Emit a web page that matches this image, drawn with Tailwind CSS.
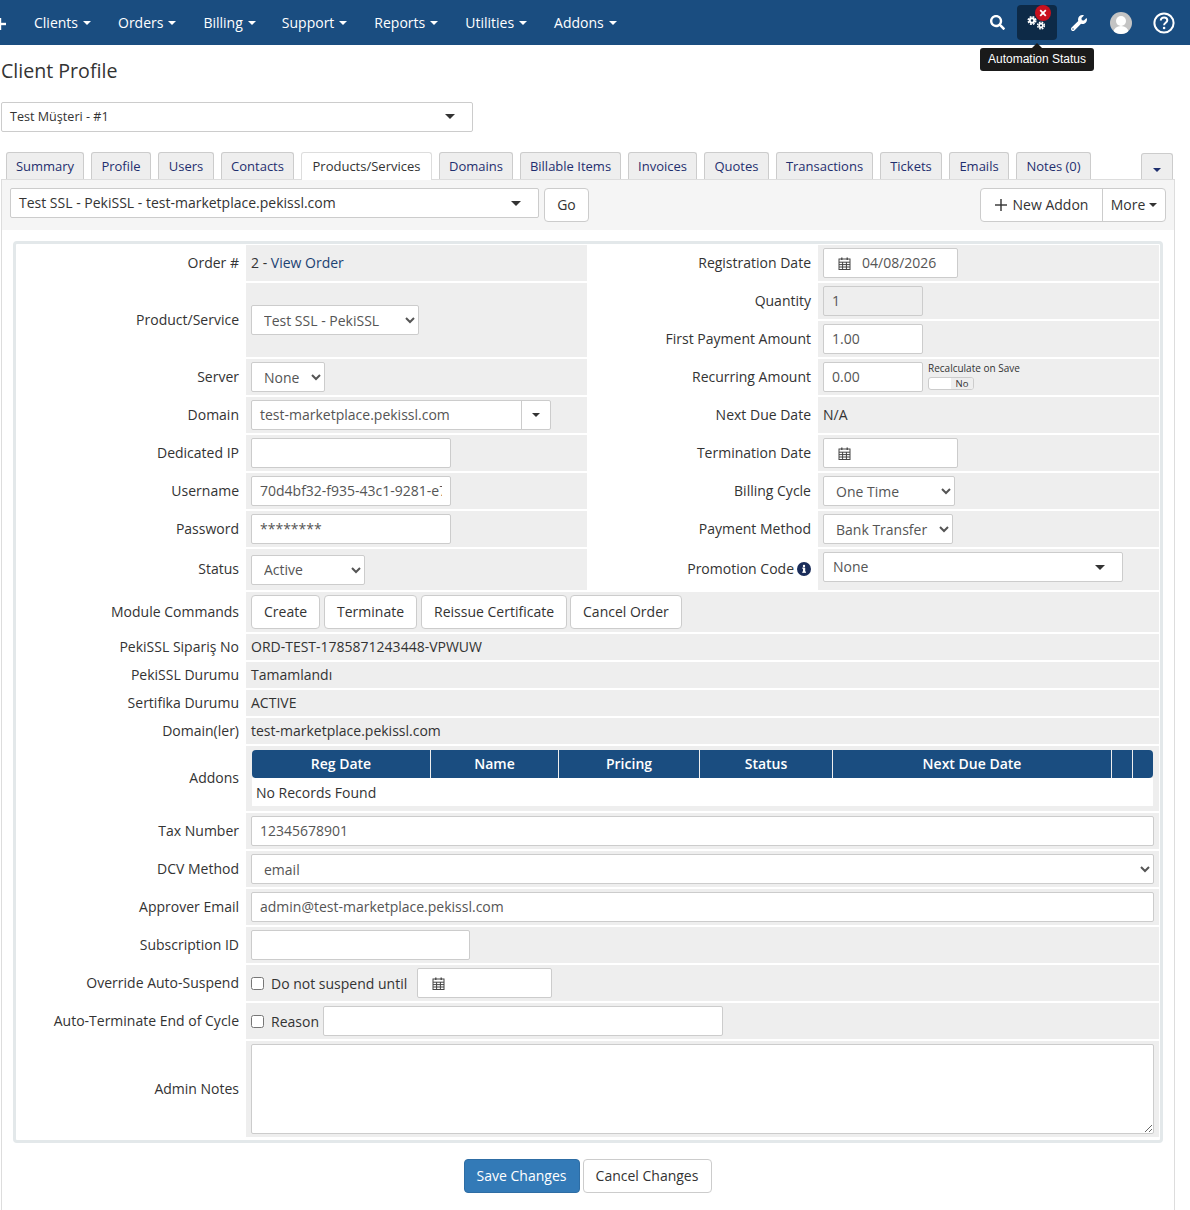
<!DOCTYPE html>
<html lang="en">
<head>
  <meta charset="UTF-8">
  <meta name="viewport" content="width=device-width, initial-scale=1.0">
  <title>Client Profile</title>
  <script src="https://cdn.jsdelivr.net/npm/@tailwindcss/browser@4"></script>
</head>
<body class="h-[1210px] overflow-hidden bg-white font-['Open_Sans',sans-serif] text-[14px] leading-[20px] text-[#333]">

  <!-- top nav -->
  <nav class="relative flex h-[45px] items-center bg-[#1a4d80] text-white">
    <svg class="absolute left-[-6px] top-[18px] h-[12px] w-[12px]" viewBox="0 0 12 12" fill="#fff"><rect x="0" y="4.8" width="12" height="2.4"/><rect x="4.8" y="0" width="2.4" height="12"/></svg>
    <a class="ml-[34px] flex items-center gap-[5px]">Clients <span class="border-x-[4px] border-t-[4px] border-x-transparent border-t-white"></span></a>
    <a class="ml-[27px] flex items-center gap-[5px]">Orders <span class="border-x-[4px] border-t-[4px] border-x-transparent border-t-white"></span></a>
    <a class="ml-[27px] flex items-center gap-[5px]">Billing <span class="border-x-[4px] border-t-[4px] border-x-transparent border-t-white"></span></a>
    <a class="ml-[26px] flex items-center gap-[5px]">Support <span class="border-x-[4px] border-t-[4px] border-x-transparent border-t-white"></span></a>
    <a class="ml-[27px] flex items-center gap-[5px]">Reports <span class="border-x-[4px] border-t-[4px] border-x-transparent border-t-white"></span></a>
    <a class="ml-[27px] flex items-center gap-[5px]">Utilities <span class="border-x-[4px] border-t-[4px] border-x-transparent border-t-white"></span></a>
    <a class="ml-[27px] flex items-center gap-[5px]">Addons <span class="border-x-[4px] border-t-[4px] border-x-transparent border-t-white"></span></a>

    <div class="ml-auto flex items-center">
      <svg class="h-[15px] w-[15px]" viewBox="0 0 512 512" fill="#fff"><path d="M505 442.7L405.3 343c-4.5-4.5-10.6-7-17-7H372c27.6-35.3 44-79.7 44-128C416 93.1 322.9 0 208 0S0 93.1 0 208s93.1 208 208 208c48.3 0 92.7-16.4 128-44v16.3c0 6.4 2.5 12.5 7 17l99.7 99.7c9.4 9.4 24.6 9.4 33.9 0l28.3-28.3c9.4-9.4 9.4-24.6.1-34zM208 336c-70.7 0-128-57.2-128-128 0-70.7 57.2-128 128-128 70.7 0 128 57.2 128 128 0 70.7-57.2 128-128 128z"/></svg>
      <div class="relative ml-[12px] flex h-[35px] w-[40px] items-center justify-center rounded-[4px] bg-[#0d2a47]">
        <svg class="h-[20px] w-[20px]" viewBox="0 0 20 20" fill="none" stroke="#fff">
          <circle cx="5" cy="7.5" r="2.2" stroke-width="1.9"/>
          <circle cx="5" cy="7.5" r="3.8" stroke-width="1.5" stroke-dasharray="1.9 1.1"/>
          <circle cx="14" cy="12.5" r="1.9" stroke-width="1.7"/>
          <circle cx="14" cy="12.5" r="3.4" stroke-width="1.4" stroke-dasharray="1.7 1"/>
        </svg>
        <span class="absolute left-[18px] top-0 flex h-[16px] w-[16px] items-center justify-center rounded-full bg-[#c8101e]">
          <svg class="h-[8px] w-[8px]" viewBox="0 0 8 8" stroke="#fff" stroke-width="1.8"><path d="M1.2 1.2l5.6 5.6M6.8 1.2L1.2 6.8"/></svg>
        </span>
      </div>
      <svg class="ml-[14px] h-[16px] w-[16px]" viewBox="0 0 512 512" fill="#fff"><path d="M507.73 109.1c-2.24-9.03-13.54-12.09-20.12-5.51l-74.36 74.36-67.88-11.31-11.31-67.88 74.36-74.36c6.62-6.62 3.43-17.9-5.66-20.16-47.38-11.74-99.55.91-136.58 37.93-39.64 39.64-50.55 97.1-34.05 147.2L18.74 402.76c-24.99 24.99-24.99 65.51 0 90.5 24.99 24.99 65.51 24.99 90.5 0l213.21-213.21c50.12 16.71 107.47 5.68 147.37-34.22 37.07-37.07 49.7-89.32 37.91-136.73zM64 472c-13.25 0-24-10.75-24-24 0-13.26 10.75-24 24-24s24 10.74 24 24c0 13.25-10.75 24-24 24z"/></svg>
      <svg class="ml-[23px] h-[22px] w-[22px]" viewBox="0 0 22 22"><defs><clipPath id="av"><circle cx="11" cy="11" r="11"/></clipPath></defs><circle cx="11" cy="11" r="11" fill="#c4c4c4"/><g clip-path="url(#av)" fill="#fff"><circle cx="11" cy="9" r="5"/><ellipse cx="11" cy="20" rx="7.5" ry="6"/></g></svg>
      <svg class="ml-[21px] mr-[15px] h-[22px] w-[22px]" viewBox="0 0 22 22" fill="none" stroke="#fff"><circle cx="11" cy="11" r="9.6" stroke-width="2"/><path d="M7.8 8.6c0-1.9 1.4-3.1 3.3-3.1 1.9 0 3.2 1.2 3.2 2.8 0 2.5-3.2 2.4-3.2 4.9" stroke-width="2"/><circle cx="11.1" cy="16" r="1.3" fill="#fff" stroke="none"/></svg>
    </div>

    <!-- tooltip -->
    <div class="absolute left-[980px] top-[48px] z-10 h-[23px] w-[114px] rounded-[3px] bg-[#1a1a1a] text-center font-['Liberation_Sans',sans-serif] text-[12px] leading-[22px] text-white">
      <span class="absolute left-[52px] top-[-5px] border-x-[5px] border-b-[5px] border-x-transparent border-b-[#1a1a1a]"></span>
      Automation Status
    </div>
  </nav>

  <h1 class="ml-[1px] mt-[12px] text-[19.6px] leading-[28px] text-[#333]">Client Profile</h1>

  <div class="ml-[1px] mt-[17px] flex h-[30px] w-[472px] items-center justify-between rounded-[2px] border border-[#ccc] pb-[1px] pl-[8px] pr-[17px] text-[12.6px]">
    <span>Test Müşteri - #1</span>
    <span class="border-x-[5px] border-t-[5px] border-x-transparent border-t-[#333]"></span>
  </div>

  <!-- tabs -->
  <div class="relative ml-[6px] mt-[20px] flex h-[28px] items-start gap-[7px] text-[13px] text-[#1f2f6e]">
    <a class="flex h-[27px] w-[78px] items-center justify-center rounded-t-[3px] border border-b-0 border-[#ccc] bg-[#eee]">Summary</a>
    <a class="flex h-[27px] w-[60px] items-center justify-center rounded-t-[3px] border border-b-0 border-[#ccc] bg-[#eee]">Profile</a>
    <a class="flex h-[27px] w-[56px] items-center justify-center rounded-t-[3px] border border-b-0 border-[#ccc] bg-[#eee]">Users</a>
    <a class="flex h-[27px] w-[73px] items-center justify-center rounded-t-[3px] border border-b-0 border-[#ccc] bg-[#eee]">Contacts</a>
    <a class="relative z-10 flex h-[28px] w-[131px] items-center justify-center rounded-t-[3px] border border-b-0 border-[#ddd] bg-white pb-[1px] text-[#333]">Products/Services</a>
    <a class="flex h-[27px] w-[74px] items-center justify-center rounded-t-[3px] border border-b-0 border-[#ccc] bg-[#eee]">Domains</a>
    <a class="flex h-[27px] w-[101px] items-center justify-center rounded-t-[3px] border border-b-0 border-[#ccc] bg-[#eee]">Billable Items</a>
    <a class="flex h-[27px] w-[69px] items-center justify-center rounded-t-[3px] border border-b-0 border-[#ccc] bg-[#eee]">Invoices</a>
    <a class="flex h-[27px] w-[65px] items-center justify-center rounded-t-[3px] border border-b-0 border-[#ccc] bg-[#eee]">Quotes</a>
    <a class="flex h-[27px] w-[97px] items-center justify-center rounded-t-[3px] border border-b-0 border-[#ccc] bg-[#eee]">Transactions</a>
    <a class="flex h-[27px] w-[62px] items-center justify-center rounded-t-[3px] border border-b-0 border-[#ccc] bg-[#eee]">Tickets</a>
    <a class="flex h-[27px] w-[60px] items-center justify-center rounded-t-[3px] border border-b-0 border-[#ccc] bg-[#eee]">Emails</a>
    <a class="flex h-[27px] w-[75px] items-center justify-center rounded-t-[3px] border border-b-0 border-[#ccc] bg-[#eee]">Notes (0)</a>
    <a class="absolute left-[1135px] top-[1px] flex h-[26px] w-[32px] items-end justify-center rounded-t-[3px] border border-b-0 border-[#ccc] bg-[#eee] pb-[7px]"><span class="border-x-[4px] border-t-[4px] border-x-transparent border-t-[#1f2f6e]"></span></a>
  </div>

  <!-- tab panel -->
  <div class="-mt-[1px] ml-[1px] h-[1031px] w-[1174px] border border-b-0 border-[#ddd]">
    <div class="flex h-[50px] items-start bg-[#f5f5f5] pl-[8px] pr-[8px] pt-[8px]">
      <div class="flex h-[30px] w-[529px] items-center justify-between rounded-[2px] border border-[#ccc] bg-white pl-[8px] pr-[17px]">
        <span>Test SSL - PekiSSL - test-marketplace.pekissl.com</span>
        <span class="border-x-[5px] border-t-[5px] border-x-transparent border-t-[#333]"></span>
      </div>
      <button class="ml-[5px] h-[34px] w-[45px] rounded-[4px] border border-[#ccc] bg-white text-[#333]">Go</button>
      <div class="ml-auto flex h-[34px] rounded-[4px] border border-[#ccc] bg-white">
        <span class="flex w-[122px] items-center justify-center gap-[6px] border-r border-[#ccc]">
          <svg class="h-[12px] w-[12px]" viewBox="0 0 12 12" fill="#333"><rect x="0" y="5.3" width="12" height="1.4"/><rect x="5.3" y="0" width="1.4" height="12"/></svg>
          New Addon
        </span>
        <span class="flex w-[62px] items-center justify-center gap-[4px]">More <span class="border-x-[4px] border-t-[4px] border-x-transparent border-t-[#333]"></span></span>
      </div>
    </div>

    <!-- form table -->
    <div class="ml-[11px] mt-[11px] w-[1150px] rounded-[4px] border-[3px] border-[#e3e8ea] bg-white pb-[3px] pl-[2px] pr-[1px] pt-[1px]">
      <div class="grid grid-cols-[226px_341px_227px_341px] gap-[2px] grid-rows-[36px_36px_36px_36px_36px_36px_36px_36px_41px_40px_26px_26px_26px_26px_65px_36px_36px_36px_36px_36px_36px_96px]">

        <div class="flex items-center justify-end pr-[5px]">Order #</div>
        <div class="flex items-center bg-[#eee] pl-[5px]">2 -&nbsp;<a class="text-[#1c4272]">View Order</a></div>
        <div class="flex items-center justify-end pr-[5px]">Registration Date</div>
        <div class="flex items-center bg-[#eee] pl-[5px]">
          <div class="flex h-[30px] w-[135px] items-center rounded-[2px] border border-[#ccc] bg-white pl-[14px] text-[#555]">
            <svg class="h-[13px] w-[13px]" viewBox="0 0 13 13" fill="none" stroke="#444"><rect x="1" y="2" width="11" height="10.5"/><path d="M1 5.2h11M1 7.6h11M1 10h11M4.6 5v7.5M8.4 5v7.5"/><path d="M3.8 .5v2.5M9.2 .5v2.5" stroke-width="1.3"/></svg>
            <span class="ml-[11px]">04/08/2026</span>
          </div>
        </div>

        <div class="row-span-2 flex items-center justify-end pr-[5px]">Product/Service</div>
        <div class="row-span-2 flex items-center bg-[#eee] pl-[5px]">
          <select class="h-[30px] w-[168px] rounded-[2px] border border-[#ccc] bg-white pl-[8px] text-[#555]"><option>Test SSL - PekiSSL</option></select>
        </div>
        <div class="flex items-center justify-end pr-[5px]">Quantity</div>
        <div class="flex items-center bg-[#eee] pl-[5px]">
          <input class="h-[30px] w-[100px] rounded-[2px] border border-[#ccc] bg-[#eee] px-[8px] pb-[2px] text-[#555]" value="1" disabled>
        </div>

        <div class="flex items-center justify-end pr-[5px]">First Payment Amount</div>
        <div class="flex items-center bg-[#eee] pl-[5px]">
          <input class="h-[30px] w-[100px] rounded-[2px] border border-[#ccc] bg-white px-[8px] pb-[2px] text-[#555]" value="1.00">
        </div>

        <div class="flex items-center justify-end pr-[5px]">Server</div>
        <div class="flex items-center bg-[#eee] pl-[5px]">
          <select class="h-[30px] w-[74px] rounded-[2px] border border-[#ccc] bg-white pl-[8px] text-[#555]"><option>None</option></select>
        </div>
        <div class="flex items-center justify-end pr-[5px]">Recurring Amount</div>
        <div class="flex items-center bg-[#eee] pl-[5px]">
          <input class="h-[30px] w-[100px] rounded-[2px] border border-[#ccc] bg-white px-[8px] pb-[2px] text-[#555]" value="0.00">
          <div class="ml-[5px] flex flex-col pb-[2px]">
            <span class="text-[10px] leading-[12px]">Recalculate on Save</span>
            <span class="mt-[3px] flex h-[13px] w-[46px] overflow-hidden rounded-[3px] border border-[#ccc] bg-white">
              <span class="w-[22px]"></span>
              <span class="flex-1 bg-[#eee] text-center text-[9.5px] leading-[12px]">No</span>
            </span>
          </div>
        </div>

        <div class="flex items-center justify-end pr-[5px]">Domain</div>
        <div class="flex items-center bg-[#eee] pl-[5px]">
          <div class="flex h-[30px] w-[300px] rounded-[2px] border border-[#ccc] bg-white text-[#555]">
            <span class="flex flex-1 items-center pl-[8px]">test-marketplace.pekissl.com</span>
            <span class="flex w-[29px] items-center justify-center border-l border-[#ccc]"><span class="border-x-[4px] border-t-[4px] border-x-transparent border-t-[#333]"></span></span>
          </div>
        </div>
        <div class="flex items-center justify-end pr-[5px]">Next Due Date</div>
        <div class="flex items-center bg-[#eee] pl-[5px]">N/A</div>

        <div class="flex items-center justify-end pr-[5px]">Dedicated IP</div>
        <div class="flex items-center bg-[#eee] pl-[5px]">
          <input class="h-[30px] w-[200px] rounded-[2px] border border-[#ccc] bg-white px-[8px] pb-[2px] text-[#555]">
        </div>
        <div class="flex items-center justify-end pr-[5px]">Termination Date</div>
        <div class="flex items-center bg-[#eee] pl-[5px]">
          <div class="flex h-[30px] w-[135px] items-center rounded-[2px] border border-[#ccc] bg-white pl-[14px]">
            <svg class="h-[13px] w-[13px]" viewBox="0 0 13 13" fill="none" stroke="#444"><rect x="1" y="2" width="11" height="10.5"/><path d="M1 5.2h11M1 7.6h11M1 10h11M4.6 5v7.5M8.4 5v7.5"/><path d="M3.8 .5v2.5M9.2 .5v2.5" stroke-width="1.3"/></svg>
          </div>
        </div>

        <div class="flex items-center justify-end pr-[5px]">Username</div>
        <div class="flex items-center bg-[#eee] pl-[5px]">
          <input class="h-[30px] w-[200px] rounded-[2px] border border-[#ccc] bg-white px-[8px] pb-[2px] text-[#555]" value="70d4bf32-f935-43c1-9281-e7a1c3">
        </div>
        <div class="flex items-center justify-end pr-[5px]">Billing Cycle</div>
        <div class="flex items-center bg-[#eee] pl-[5px]">
          <select class="h-[30px] w-[132px] rounded-[2px] border border-[#ccc] bg-white pl-[8px] text-[#555]"><option>One Time</option></select>
        </div>

        <div class="flex items-center justify-end pr-[5px]">Password</div>
        <div class="flex items-center bg-[#eee] pl-[5px]">
          <input class="h-[30px] w-[200px] rounded-[2px] border border-[#ccc] bg-white px-[8px] pb-[2px] text-[#555]" value="********">
        </div>
        <div class="flex items-center justify-end pr-[5px]">Payment Method</div>
        <div class="flex items-center bg-[#eee] pl-[5px]">
          <select class="h-[30px] w-[130px] rounded-[2px] border border-[#ccc] bg-white pl-[8px] text-[#555]"><option>Bank Transfer</option></select>
        </div>

        <div class="flex items-center justify-end pb-[1px] pr-[5px]">Status</div>
        <div class="flex items-center bg-[#eee] pl-[5px]">
          <select class="h-[30px] w-[114px] rounded-[2px] border border-[#ccc] bg-white pl-[8px] text-[#555]"><option>Active</option></select>
        </div>
        <div class="flex items-center justify-end gap-[3px] pb-[1px] pr-[5px]">
          Promotion Code
          <svg class="h-[14px] w-[14px]" viewBox="0 0 14 14"><circle cx="7" cy="7" r="7" fill="#1a2d5a"/><rect x="6" y="5.8" width="2.2" height="4.4" fill="#fff"/><rect x="5.2" y="9.6" width="3.8" height="1.2" fill="#fff"/><rect x="5.2" y="5.6" width="2.5" height="1.1" fill="#fff"/><circle cx="7" cy="3.9" r="1.2" fill="#fff"/></svg>
        </div>
        <div class="flex items-start bg-[#eee] pl-[5px] pt-[3px]">
          <div class="flex h-[30px] w-[300px] items-center justify-between rounded-[2px] border border-[#ccc] bg-white pl-[9px] pr-[17px] text-[#555]">
            <span>None</span>
            <span class="border-x-[5px] border-t-[5px] border-x-transparent border-t-[#333]"></span>
          </div>
        </div>

        <div class="flex items-center justify-end pr-[5px]">Module Commands</div>
        <div class="col-span-3 flex items-center bg-[#eee] pl-[5px]">
          <button class="h-[34px] rounded-[4px] border border-[#ccc] bg-white px-[12px]">Create</button>
          <button class="ml-[4px] h-[34px] rounded-[4px] border border-[#ccc] bg-white px-[12px]">Terminate</button>
          <button class="ml-[4px] h-[34px] rounded-[4px] border border-[#ccc] bg-white px-[12px]">Reissue Certificate</button>
          <button class="ml-[3px] h-[34px] rounded-[4px] border border-[#ccc] bg-white px-[12px]">Cancel Order</button>
        </div>

        <div class="flex items-center justify-end pr-[5px]">PekiSSL Sipariş No</div>
        <div class="col-span-3 flex items-center bg-[#eee] pl-[5px]">ORD-TEST-1785871243448-VPWUW</div>
        <div class="flex items-center justify-end pr-[5px]">PekiSSL Durumu</div>
        <div class="col-span-3 flex items-center bg-[#eee] pl-[5px]">Tamamlandı</div>
        <div class="flex items-center justify-end pr-[5px]">Sertifika Durumu</div>
        <div class="col-span-3 flex items-center bg-[#eee] pl-[5px]">ACTIVE</div>
        <div class="flex items-center justify-end pr-[5px]">Domain(ler)</div>
        <div class="col-span-3 flex items-center bg-[#eee] pl-[5px]">test-marketplace.pekissl.com</div>

        <div class="flex items-center justify-end pb-[2px] pr-[5px]">Addons</div>
        <div class="col-span-3 bg-[#eee] px-[6px] pt-[4px]">
          <div class="grid h-[28px] grid-cols-[178px_127px_140px_132px_278px_20px_20px] gap-x-[1px] font-semibold text-white">
            <div class="flex items-center justify-center rounded-l-[4px] bg-[#1a4d80]">Reg Date</div>
            <div class="flex items-center justify-center bg-[#1a4d80]">Name</div>
            <div class="flex items-center justify-center bg-[#1a4d80]">Pricing</div>
            <div class="flex items-center justify-center bg-[#1a4d80]">Status</div>
            <div class="flex items-center justify-center bg-[#1a4d80]">Next Due Date</div>
            <div class="bg-[#1a4d80]"></div>
            <div class="rounded-r-[4px] bg-[#1a4d80]"></div>
          </div>
          <div class="flex h-[28px] items-center bg-white pl-[4px] pt-[1px]">No Records Found</div>
        </div>

        <div class="flex items-center justify-end pr-[5px]">Tax Number</div>
        <div class="col-span-3 flex items-center bg-[#eee] px-[5px]">
          <input class="h-[30px] w-full rounded-[2px] border border-[#ccc] bg-white px-[8px] pb-[2px] text-[#555]" value="12345678901">
        </div>
        <div class="flex items-center justify-end pr-[5px]">DCV Method</div>
        <div class="col-span-3 flex items-center bg-[#eee] px-[5px]">
          <select class="h-[30px] w-full rounded-[2px] border border-[#ccc] bg-white pl-[8px] text-[#555]"><option>email</option></select>
        </div>
        <div class="flex items-center justify-end pr-[5px]">Approver Email</div>
        <div class="col-span-3 flex items-center bg-[#eee] px-[5px]">
          <input class="h-[30px] w-full rounded-[2px] border border-[#ccc] bg-white px-[8px] pb-[2px] text-[#555]" value="admin@test-marketplace.pekissl.com">
        </div>
        <div class="flex items-center justify-end pr-[5px]">Subscription ID</div>
        <div class="col-span-3 flex items-center bg-[#eee] px-[5px]">
          <input class="h-[30px] w-[219px] rounded-[2px] border border-[#ccc] bg-white px-[8px] pb-[2px] text-[#555]">
        </div>
        <div class="flex items-center justify-end pr-[5px]">Override Auto-Suspend</div>
        <div class="col-span-3 flex items-center bg-[#eee] pl-[5px]">
          <input type="checkbox" class="h-[13px] w-[13px]">
          <span class="ml-[7px] pt-[2px]">Do not suspend until</span>
          <div class="ml-[10px] flex h-[30px] w-[135px] items-center rounded-[2px] border border-[#ccc] bg-white pl-[14px]">
            <svg class="h-[13px] w-[13px]" viewBox="0 0 13 13" fill="none" stroke="#444"><rect x="1" y="2" width="11" height="10.5"/><path d="M1 5.2h11M1 7.6h11M1 10h11M4.6 5v7.5M8.4 5v7.5"/><path d="M3.8 .5v2.5M9.2 .5v2.5" stroke-width="1.3"/></svg>
          </div>
        </div>
        <div class="flex items-center justify-end pr-[5px]">Auto-Terminate End of Cycle</div>
        <div class="col-span-3 flex items-center bg-[#eee] pl-[5px]">
          <input type="checkbox" class="h-[13px] w-[13px]">
          <span class="ml-[7px] pt-[2px]">Reason</span>
          <input class="ml-[4px] h-[30px] w-[400px] rounded-[2px] border border-[#ccc] bg-white px-[8px] pb-[2px] text-[#555]">
        </div>
        <div class="flex items-center justify-end pr-[5px]">Admin Notes</div>
        <div class="col-span-3 flex items-center bg-[#eee] px-[5px]">
          <textarea class="h-[90px] w-full rounded-[2px] border border-[#ccc] bg-white"></textarea>
        </div>
      </div>
    </div>

    <div class="mt-[16px] flex justify-center gap-[3px] pr-[1px]">
      <button class="h-[34px] w-[116px] rounded-[4px] border border-[#2e6da4] bg-[#337ab7] text-white">Save Changes</button>
      <button class="h-[34px] w-[129px] rounded-[4px] border border-[#ccc] bg-white">Cancel Changes</button>
    </div>
  </div>
</body>
</html>
